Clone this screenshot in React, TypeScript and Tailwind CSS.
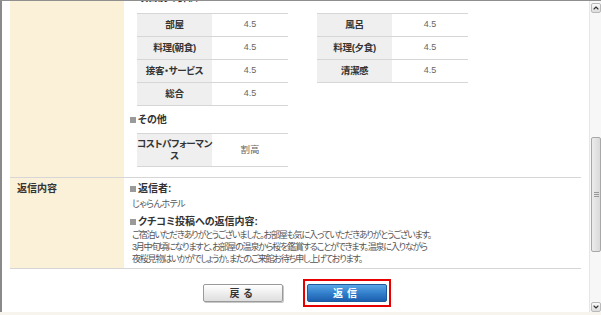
import { ChevronDown, ChevronUp } from "lucide-react";

const font = "font-['Liberation_Sans','Noto_Sans_CJK_JP',sans-serif] [font-feature-settings:'palt']";

type Row = { label: string; value: string };

const leftRows: Row[] = [
  { label: "部屋", value: "4.5" },
  { label: "料理(朝食)", value: "4.5" },
  { label: "接客・サービス", value: "4.5" },
  { label: "総合", value: "4.5" },
];

const rightRows: Row[] = [
  { label: "風呂", value: "4.5" },
  { label: "料理(夕食)", value: "4.5" },
  { label: "清潔感", value: "4.5" },
];

function Mark() {
  return <span className="mr-[2px] inline-block h-[6px] w-[6px] bg-[#9a9a9a]" />;
}

function Heading({ children }: { children: React.ReactNode }) {
  return (
    <div className="flex h-[14px] items-center text-[10px] leading-[14px] font-bold text-[#333]">
      <Mark />
      {children}
    </div>
  );
}

function RatingTable({ rows }: { rows: Row[] }) {
  return (
    <div className="w-[151px] border-t border-[#d6d6d6]">
      {rows.map((r) => (
        <div key={r.label} className="flex h-[23px] border-b border-[#d6d6d6]">
          <div className="flex w-[75px] items-center justify-center bg-[#efefef] text-[9.5px] font-bold tracking-[-0.3px] text-[#333]">
            {r.label}
          </div>
          <div className="flex flex-1 items-center justify-center text-[9px] text-[#666]">{r.value}</div>
        </div>
      ))}
    </div>
  );
}

function Scrollbar() {
  return (
    <div className="flex w-[12px] flex-col border-l border-[#e6e6e6] bg-[#f7f7f7] pl-px pr-[1px] pt-[2px]">
      <div className="flex h-[10px] w-[10px] items-center justify-center rounded-[2px] border border-[#b9b9b9] bg-gradient-to-b from-[#fafafa] to-[#dcdcdc] text-[#333]">
        <ChevronUp size={8} strokeWidth={3.5} />
      </div>
      <div className="h-[124px]" />
      <div className="flex h-[115px] w-[10px] items-center justify-center rounded-[2px] border border-[#a8a8a8] bg-gradient-to-r from-[#ececec] to-[#d9d9d9]">
        <div className="flex flex-col gap-px">
          <div className="h-px w-[5px] bg-[#999]" />
          <div className="h-px w-[5px] bg-[#999]" />
          <div className="h-px w-[5px] bg-[#999]" />
        </div>
      </div>
      <div className="flex-1" />
      <div className="flex h-[10px] w-[10px] items-center justify-center rounded-[2px] border border-[#b9b9b9] bg-gradient-to-b from-[#fafafa] to-[#dcdcdc] text-[#333]">
        <ChevronDown size={8} strokeWidth={3.5} />
      </div>
    </div>
  );
}

export default function App() {
  return (
    <div className={`flex h-[315px] w-[601px] flex-col overflow-hidden border-t border-[#8f8f8f] bg-white ${font}`}>
      <div className="flex h-[311px] border-l-2 border-[#8a8a8a]">
        <div className="flex-1 overflow-hidden px-[8px]">
          {/* ratings, scrolled partly out of view */}
          <div className="-mt-[10px] flex border-b border-[#d6d6d6]">
            <div className="w-[114px] shrink-0 bg-[#fbf0d8]" />
            <div className="flex-1 pb-[10px] pl-[6px]">
              <Heading>項目別の評価</Heading>
              <div className="mt-[8px] flex gap-[29px] pl-[7px]">
                <RatingTable rows={leftRows} />
                <RatingTable rows={rightRows} />
              </div>
              <div className="mt-[7px]">
                <Heading>その他</Heading>
              </div>
              <div className="mt-[6px] pl-[7px]">
                <div className="w-[151px] border-t border-[#d6d6d6]">
                  <div className="flex h-[33px] border-b border-[#d6d6d6]">
                    <div className="flex w-[75px] items-center justify-center whitespace-nowrap bg-[#efefef] text-center text-[9.5px] leading-[12px] font-bold tracking-[-0.4px] text-[#333]">
                      コストパフォーマン
                      <br />ス
                    </div>
                    <div className="flex flex-1 items-center justify-center text-[9.5px] text-[#666]">割高</div>
                  </div>
                </div>
              </div>
            </div>
          </div>

          {/* reply */}
          <div className="flex border-b border-[#d6d6d6]">
            <div className="w-[114px] shrink-0 bg-[#fbf0d8] pl-[7px] pt-[4px] text-[10px] leading-[13px] font-bold text-[#333]">
              返信内容
            </div>
            <div className="flex-1 pb-[3px] pl-[6px] pt-[4px]">
              <div className="flex h-[13px] items-center text-[10px] font-bold text-[#333]">
                <Mark />返信者:
              </div>
              <div className="mt-[3px] pl-[2px] text-[9px] leading-[13px] tracking-[-0.5px] text-[#555]">じゃらんホテル</div>
              <div className="mt-[4px] flex h-[13px] items-center text-[10px] font-bold text-[#333]">
                <Mark />クチコミ投稿への返信内容:
              </div>
              <p className="mt-[1px] pl-[2px] text-[9px] leading-[12px] tracking-[-1.2px] text-[#555]">
                ご宿泊いただきありがとうございました。お部屋も気に入っていただきありがとうございます。
                <br />
                3月中旬頃になりますと、お部屋の温泉から桜を鑑賞することができます。温泉に入りながら
                <br />
                夜桜見物はいかがでしょうか。またのご来館お待ち申し上げております。
              </p>
            </div>
          </div>

          {/* buttons */}
          <div className="mt-[10px] flex items-center justify-center gap-[20px] pl-[3px]">
            <button className="flex h-[18px] w-[80px] items-center justify-center rounded-[2px] border border-[#9a9a9a] bg-gradient-to-b from-[#ffffff] to-[#dedede] text-[10px] font-bold tracking-[4px] text-[#333] shadow-[1px_1px_0_#c8c8c8]">
              戻る
            </button>
            <div className="border-2 border-[#e60000] px-[2px] py-[3px]">
              <button className="flex h-[18px] w-[80px] items-center justify-center rounded-[2px] border border-[#1d5a9e] bg-gradient-to-b from-[#5aa6e6] via-[#3380cc] to-[#1c5fae] text-[10px] font-bold tracking-[4px] text-white">
                返信
              </button>
            </div>
          </div>
        </div>
        <Scrollbar />
      </div>
      <div className="h-[3px] bg-[#f6f4ec]" />
    </div>
  );
}
